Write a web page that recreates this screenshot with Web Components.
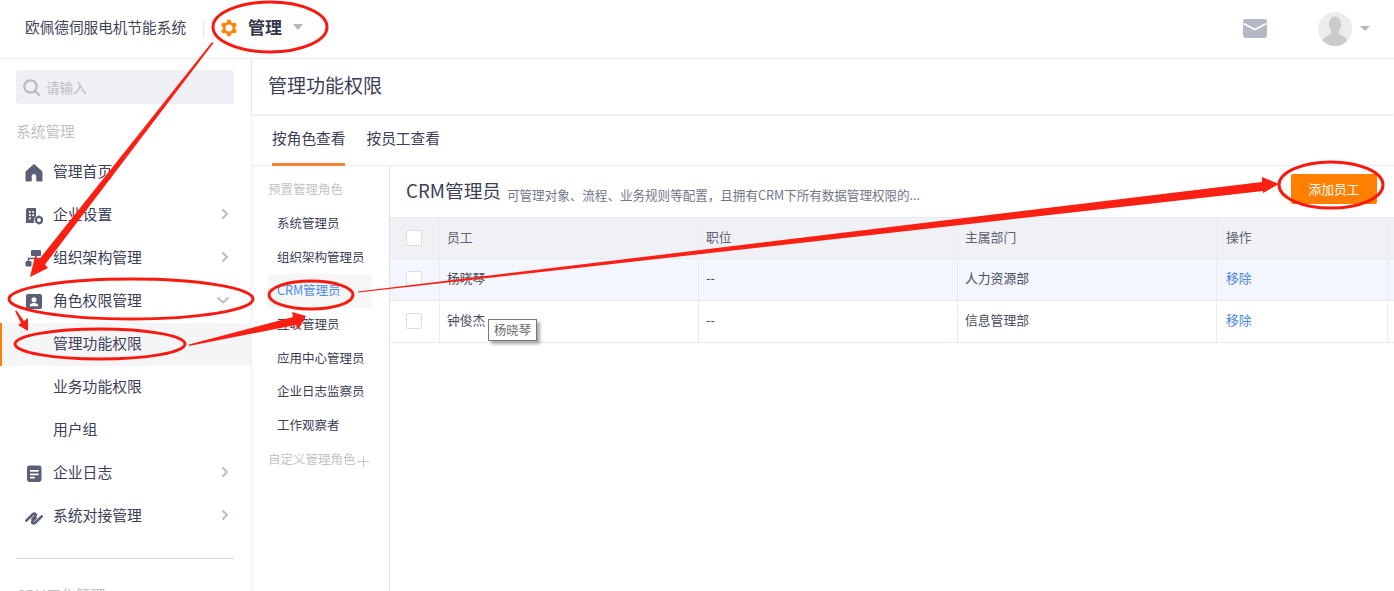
<!DOCTYPE html>
<html lang="zh">
<head>
<meta charset="utf-8">
<title>管理功能权限</title>
<style>
  html, body { margin: 0; height: 591px; overflow: hidden; background: #fff; }
  body { font-family: "Noto Sans CJK SC", "Noto Sans", sans-serif; color: #3b4056; }
</style>
</head>
<body>
<app-shell>
  <top-bar slot="top"></top-bar>
  <side-nav slot="side">
    <nav-item icon="home">管理首页</nav-item>
    <nav-item icon="company" chevron="right">企业设置</nav-item>
    <nav-item icon="org" chevron="right">组织架构管理</nav-item>
    <nav-item icon="role" chevron="down">角色权限管理</nav-item>
    <nav-item active>管理功能权限</nav-item>
    <nav-item>业务功能权限</nav-item>
    <nav-item>用户组</nav-item>
    <nav-item icon="log" chevron="right">企业日志</nav-item>
    <nav-item icon="link" chevron="right">系统对接管理</nav-item>
  </side-nav>
  <page-panel slot="main">
    <role-list slot="roles"></role-list>
    <role-detail slot="detail">
      <staff-row head label="员工" job="职位" dept="主属部门" action="操作"></staff-row>
      <staff-row hover label="杨晓琴" job="--" dept="人力资源部" action="移除"></staff-row>
      <staff-row label="钟俊杰" job="--" dept="信息管理部" action="移除"></staff-row>
    </role-detail>
  </page-panel>
  <hover-tip slot="over">杨晓琴</hover-tip>
  <mark-up slot="over"></mark-up>
</app-shell>

<script>
const ICONS = {
  home: `<path d="M9 1.5 1 8.6V18h5.2v-4.6a2.8 2.8 0 0 1 5.6 0V18H17V8.6z" fill="#5a5f75" stroke="#5a5f75" stroke-linejoin="round"/>`,
  company: `<path d="M2 2h9v8.8a4.6 4.6 0 0 0-1.600 6.200H1V4z" fill="#5a5f75"/>
    <path d="M4 5h1.700v1.700H4zM7.300 5H9v1.700H7.300zM4 8.300h1.700V10H4zM7.300 8.300H9V10H7.300zM4 11.600h1.700v1.700H4z" fill="#fff"/>
    <circle cx="14" cy="14" r="3" fill="none" stroke="#5a5f75" stroke-width="2.200"/>
    <path d="M14 9.600v1.600M14 16.800v1.600M9.600 14h1.600M16.800 14h1.600" stroke="#5a5f75" stroke-width="1.600"/>`,
  org: `<rect x="6" y="1" width="10" height="6" rx="1" fill="#5a5f75"/>
    <path d="M3.500 13V9.500h11V13M11 7v3" fill="none" stroke="#5a5f75" stroke-width="1.500"/>
    <rect x="0.500" y="12" width="6" height="5.500" rx="1.200" fill="#5a5f75"/>
    <rect x="11.500" y="12" width="6" height="5.500" rx="1.200" fill="#5a5f75"/>`,
  role: `<rect x="1" y="2" width="16" height="15" rx="2" fill="#5a5f75"/>
    <circle cx="9" cy="7.800" r="2.500" fill="#fff"/>
    <path d="M4.600 14.200c0-2.400 2-3.200 4.400-3.200s4.400.8 4.400 3.200z" fill="#fff"/>`,
  log: `<rect x="2" y="1.500" width="14.500" height="16.500" rx="2.400" fill="#5a5f75"/>
    <path d="M5 6h8.600v1.800H5zM5 9.400h8.600v1.800H5zM5 12.800h4.800v1.800H5z" fill="#fff"/>`,
  link: `<g fill="none" stroke="#5a5f75" stroke-width="2.600" stroke-linecap="round">
      <path d="M1.300 13.700l6.200-6.200Q9.500 5.800 10.700 7.300 11.300 8.500 9.500 10l-2 2"/>
      <path d="M16.700 9.300l-6.200 6.200Q8.500 17.200 7.300 15.700 6.700 14.500 8.500 13l2-2"/>
    </g>`
};

class AppShell extends HTMLElement {
  constructor() {
    super();
    this.attachShadow({ mode: "open" });
    this.shadowRoot.innerHTML = `
    <style>
      :host {
        display: grid;
        grid-template: 59px 1fr / 252px 1fr;
        width: 1394px;
        height: 591px;
        overflow: hidden;
        position: relative;
      }
      ::slotted([slot="top"]) { grid-column: 1 / 3; }
    </style>
    <slot name="top"></slot>
    <slot name="side"></slot>
    <slot name="main"></slot>
    <slot name="over"></slot>`;
  }
}

class TopBar extends HTMLElement {
  constructor() {
    super();
    this.attachShadow({ mode: "open" });
    this.shadowRoot.innerHTML = `
    <style>
      :host {
        display: flex;
        align-items: center;
        height: 58px;
        border-bottom: 1px solid #eeeff2;
        padding-left: 25px;
        box-sizing: content-box;
      }
      .brand { font-size: 14.650px; color: #3f4459; width: 178px; white-space: nowrap; line-height: 20px; margin-bottom: 5px; }
      .sep { width: 1px; height: 18px; background: #e6e6e9; margin-right: 16px; }
      .gear { width: 18px; height: 18px; flex: none; margin-bottom: 2px; }
      .module { font-size: 17px; font-weight: 700; color: #33384e; margin: 0 0 5px 10px; line-height: 22px; white-space: nowrap; }
      .caret { width: 0; height: 0; border: 5.500px solid transparent; border-top: 6px solid #b3b6c3; border-bottom: 0; margin-bottom: 4px; }
      .module + .caret { margin-left: 11px; }
      .right { margin-left: auto; display: flex; align-items: center; padding-right: 24px; }
      .mail { width: 24px; height: 19px; margin-right: 51px; display: block; margin-bottom: 1px; }
      .avatar { width: 34px; height: 34px; display: block; margin-right: 8px; }
      .right .caret { border-width: 5px; border-top-width: 5.500px; border-bottom: 0; margin-bottom: 1px; }
    </style>
    <div class="brand">欧佩德伺服电机节能系统</div>
    <div class="sep"></div>
    <svg class="gear" viewBox="0 0 18 18">
      <g fill="#ff8408">
        <circle cx="9" cy="9" r="6.200"/>
        <circle cx="9" cy="2.800" r="2.200"/><circle cx="9" cy="15.200" r="2.200"/>
        <circle cx="3.600" cy="5.900" r="2.200"/><circle cx="14.400" cy="5.900" r="2.200"/>
        <circle cx="3.600" cy="12.100" r="2.200"/><circle cx="14.400" cy="12.100" r="2.200"/>
      </g>
      <circle cx="9" cy="9" r="3.500" fill="#fff"/>
    </svg>
    <div class="module">管理</div>
    <div class="caret"></div>
    <div class="right">
      <svg class="mail" viewBox="0 0 24 19">
        <rect width="24" height="19" rx="3" fill="#b4b8c5"/>
        <path d="M.5 4.500 12 10.500l11.500-6" fill="none" stroke="#fff" stroke-width="1.700"/>
      </svg>
      <svg class="avatar" viewBox="0 0 34 34">
        <defs><clipPath id="c"><circle cx="17" cy="17" r="17"/></clipPath></defs>
        <circle cx="17" cy="17" r="17" fill="#ececec"/>
        <g clip-path="url(#c)" fill="#cbcbcb">
          <ellipse cx="17" cy="12.500" rx="6.200" ry="8"/>
          <path d="M13.500 19h7l.8 3.400C26 24 30 25.500 30 34H4c0-8.500 4-10 8.700-11.600z"/>
        </g>
      </svg>
      <div class="caret"></div>
    </div>`;
  }
}

class SideNav extends HTMLElement {
  constructor() {
    super();
    this.attachShadow({ mode: "open" });
    this.shadowRoot.innerHTML = `
    <style>
      :host {
        display: block;
        box-sizing: border-box;
        border-right: 1px solid #f1f1f3;
        overflow: hidden;
        padding-top: 11px;
      }
      .search {
        margin: 0 17px 0 16px;
        height: 34px;
        background: #eff0f5;
        border-radius: 3px;
        display: flex;
        align-items: center;
        padding-left: 6px;
        gap: 5px;
        font-size: 13.600px;
        color: #bcbcc0;
      }
      .search svg { width: 19px; height: 19px; flex: none; }
      .label { font-size: 14.700px; line-height: 28px; color: #c0c0c2; padding-left: 16px; white-space: nowrap; }
      .first { margin: 13px 0 5.500px; }
      hr { margin: 20.500px 17px 22px 16px; border: 0; height: 1px; background: #d8d8d8; }
    </style>
    <div class="search">
      <svg viewBox="0 0 19 19" fill="none" stroke="#b9bbc0" stroke-width="2.200">
        <circle cx="8.500" cy="8.500" r="6.200"/><path d="m13 13 4 4" stroke-linecap="round"/>
      </svg>
      请输入
    </div>
    <div class="label first">系统管理</div>
    <slot></slot>
    <hr>
    <div class="label">CRM工作管理</div>`;
  }
}

class NavItem extends HTMLElement {
  constructor() {
    super();
    this.attachShadow({ mode: "open" });
  }

  connectedCallback() {
    const icon = ICONS[this.getAttribute("icon")] || "";
    const chevron = this.getAttribute("chevron");
    this.shadowRoot.innerHTML = `
    <style>
      :host {
        display: flex;
        align-items: center;
        height: 43px;
        font-size: 14.800px;
        color: #3b4056;
        padding-left: 25px;
        box-sizing: border-box;
      }
      :host([active]) {
        background: #f5f5f7;
        border-left: 2px solid #ff8000;
        padding-left: 23px;
      }
      .ico { width: 18px; height: 19px; flex: none; margin-right: 10px; }
      .txt { white-space: nowrap; padding-bottom: 4px; }
      .chev { width: 10px; height: 12px; margin: 0 21px 2px auto; }
      .down { width: 14px; height: 9px; margin-right: 21px; }
    </style>
    <svg class="ico" viewBox="0 0 18 19">${icon}</svg>
    <span class="txt"><slot></slot></span>
    ${chevron === "right" ? `<svg class="chev" viewBox="0 0 10 12"><path d="m2.500 1.500 4.500 4.500-4.500 4.500" fill="none" stroke="#b9bcc8" stroke-width="2"/></svg>` : ""}
    ${chevron === "down" ? `<svg class="chev down" viewBox="0 0 14 9"><path d="m1.500 1.500 5.500 5 5.500-5" fill="none" stroke="#b9bcc8" stroke-width="2"/></svg>` : ""}`;
  }
}

class PagePanel extends HTMLElement {
  constructor() {
    super();
    this.attachShadow({ mode: "open" });
    this.shadowRoot.innerHTML = `
    <style>
      :host { display: flex; flex-direction: column; min-width: 0; }
      .title {
        height: 55px;
        flex: none;
        box-sizing: border-box;
        padding: 0 0 4px 16px;
        display: flex;
        align-items: center;
        font-size: 19px;
        color: #3b4056;
        box-shadow: 0 1px 3px #0000001f;
      }
      .tabs {
        height: 52px;
        flex: none;
        box-sizing: border-box;
        border-bottom: 1px solid #eeeff2;
        display: flex;
        gap: 21px;
        padding-left: 20px;
        font-size: 14.700px;
        color: #3b4056;
      }
      .tab { display: flex; align-items: center; height: 52px; box-sizing: border-box; white-space: nowrap; padding-bottom: 6px; }
      .on { border-bottom: 3px solid #ff8030; padding-bottom: 3px; }
      .body { flex: 1; display: flex; min-height: 0; }
    </style>
    <div class="title">管理功能权限</div>
    <div class="tabs">
      <div class="tab on">按角色查看</div>
      <div class="tab">按员工查看</div>
    </div>
    <div class="body">
      <slot name="roles"></slot>
      <slot name="detail"></slot>
    </div>`;
  }
}

class RoleList extends HTMLElement {
  constructor() {
    super();
    this.attachShadow({ mode: "open" });
    const roles = ["系统管理员", "组织架构管理员", "CRM管理员", "互联管理员", "应用中心管理员", "企业日志监察员", "工作观察者"];
    this.shadowRoot.innerHTML = `
    <style>
      :host {
        display: flex;
        flex-direction: column;
        flex: none;
        width: 138px;
        box-sizing: border-box;
        border-right: 1px solid #dedfe3;
        padding: 7px 17px 0 16px;
        font-size: 12.500px;
        color: #3b4056;
      }
      div { height: 33.700px; box-sizing: border-box; display: flex; align-items: center; padding: 0 0 2px 9px; white-space: nowrap; }
      .cap { padding-left: 0; color: #c2c3c8; }
      .sel { background: #f6f6f7; color: #4a8bee; }
      .plus { margin-left: 2px; width: 11px; height: 11px; flex: none; position: relative; top: 3px; }
    </style>
    <div class="cap">预置管理角色</div>
    ${roles.map(r => `<div class="${r === "CRM管理员" ? "sel" : ""}">${r}</div>`).join("")}
    <div class="cap">自定义管理角色<svg class="plus" viewBox="0 0 11 11"><path d="M5.500 0v11M0 5.500h11" stroke="#c2c3c8"/></svg></div>`;
  }
}

class RoleDetail extends HTMLElement {
  constructor() {
    super();
    this.attachShadow({ mode: "open" });
    this.shadowRoot.innerHTML = `
    <style>
      :host { display: block; flex: 1; min-width: 0; }
      .head { height: 51px; display: flex; align-items: center; padding: 0 17px 0 16px; box-sizing: border-box; white-space: nowrap; }
      h2 { font-size: 18.700px; font-weight: 400; margin: 0 6px 4px 0; color: #3b4056; }
      p { font-size: 12.560px; margin: 6px 0 0; color: #73768a; }
      button {
        margin: 0 0 5px auto;
        width: 86px;
        height: 30px;
        padding: 0 0 2px;
        border: 0;
        border-radius: 2px;
        background: #ff7f00;
        color: #fff;
        font: 12.800px "Noto Sans CJK SC", sans-serif;
      }
    </style>
    <div class="head">
      <h2>CRM管理员</h2>
      <p>可管理对象、流程、业务规则等配置，且拥有CRM下所有数据管理权限的...</p>
      <button>添加员工</button>
    </div>
    <slot></slot>`;
  }
}

class StaffRow extends HTMLElement {
  constructor() {
    super();
    this.attachShadow({ mode: "open" });
  }

  connectedCallback() {
    const a = n => this.getAttribute(n);
    this.shadowRoot.innerHTML = `
    <style>
      :host {
        display: grid;
        grid-template-columns: 50px 259px 259px 259px 171px 6px;
        height: 42px;
        box-sizing: border-box;
        border-bottom: 1px solid #e6e9f1;
        font-size: 12.800px;
        color: #4a4d5c;
      }
      :host([head]) { background: #f0f1f5; border-top: 1px solid #e6e9f1; color: #5d6070; }
      :host([hover]) { background: #f3f6fd; }
      div {
        display: flex;
        align-items: center;
        padding: 0 0 4px 7px;
        border-right: 1px solid #e8ebf3;
        white-space: nowrap;
      }
      .box { padding: 0 0 1px 16px; }
      .op { padding-left: 9px; }
      .act { color: #4a86e0; }
      :host([head]) .act { color: inherit; }
      i { display: block; width: 16px; height: 16px; box-sizing: border-box; background: #fff; border: 1px solid #dcdde2; border-radius: 2px; }
      .end { border-right: 0; padding: 0; }
    </style>
    <div class="box"><i></i></div>
    <div>${a("label")}</div>
    <div>${a("job")}</div>
    <div>${a("dept")}</div>
    <div class="op"><span class="act">${a("action")}</span></div>
    <div class="end"></div>`;
  }
}

class HoverTip extends HTMLElement {
  constructor() {
    super();
    this.attachShadow({ mode: "open" });
    this.shadowRoot.innerHTML = `
    <style>
      :host {
        position: absolute;
        left: 488px;
        top: 319px;
        width: 49px;
        height: 22px;
        padding-bottom: 1px;
        box-sizing: border-box;
        border: 1px solid #777;
        background: #fff;
        box-shadow: 3px 3px 3px #aaa;
        font-size: 12.300px;
        color: #666;
        display: flex;
        align-items: center;
        justify-content: center;
      }
    </style>
    <slot></slot>`;
  }
}

class MarkUp extends HTMLElement {
  constructor() {
    super();
    this.attachShadow({ mode: "open" });
    const rings = [[270, 27, 57, 25], [131, 299, 122, 20], [100, 344, 85, 15], [311, 295, 42, 14], [1331, 185, 52, 23]];
    const arrows = [
      "212,42 213.5,43 45,264.5 48,268 30,277 35,256 39,259.6",
      "15,311 16.5,310.5 24,321 28,318 28,331 18,325 21,323",
      "189,344.5 293,317 292,312 306,316 298,330 296,325 189,346",
      "358,291.5 1262,182 1262,177 1279,184 1263,193 1263,191 358,292.5"
    ];
    this.shadowRoot.innerHTML = `
    <style>
      :host { position: absolute; inset: 0; pointer-events: none; }
      svg { display: block; width: 100%; height: 100%; }
    </style>
    <svg viewBox="0 0 1394 591">
      ${rings.map(([x, y, rx, ry]) => `<ellipse cx="${x}" cy="${y}" rx="${rx}" ry="${ry}" fill="none" stroke="#f8190f" stroke-width="3"/>`).join("")}
      ${arrows.map(p => `<polygon points="${p}" fill="#fb1f14"/>`).join("")}
    </svg>`;
  }
}

customElements.define("app-shell", AppShell);
customElements.define("top-bar", TopBar);
customElements.define("side-nav", SideNav);
customElements.define("nav-item", NavItem);
customElements.define("page-panel", PagePanel);
customElements.define("role-list", RoleList);
customElements.define("role-detail", RoleDetail);
customElements.define("staff-row", StaffRow);
customElements.define("hover-tip", HoverTip);
customElements.define("mark-up", MarkUp);
</script>
</body>
</html>
